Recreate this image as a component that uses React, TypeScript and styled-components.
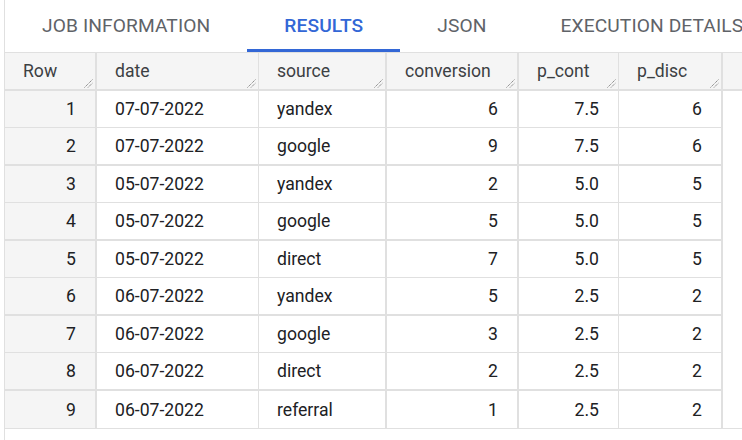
import styled, { createGlobalStyle } from "styled-components";

const GlobalStyle = createGlobalStyle`
  html, body {
    margin: 0;
    padding: 0;
    background: #ffffff;
  }
  body {
    font-family: Roboto, "Liberation Sans", Arial, sans-serif;
  }
`;

const Page = styled.div`
  margin-left: 4px;
  border-left: 1px solid #e0e0e0;
  height: 440px;
  overflow: hidden;
  background: #ffffff;
`;

const TabBar = styled.div`
  display: flex;
  height: 52px;
  white-space: nowrap;
`;

const Tab = styled.div<{ $active?: boolean }>`
  display: flex;
  align-items: center;
  justify-content: center;
  box-sizing: border-box;
  padding: 1px 37px 0;
  height: 52px;
  font-size: 19.2px;
  font-weight: ${(p) => (p.$active ? 500 : 400)};
  letter-spacing: 0.1px;
  color: ${(p) => (p.$active ? "#3367d6" : "#5f6368")};
  border-bottom: 3px solid ${(p) => (p.$active ? "#3367d6" : "transparent")};
  flex-shrink: 0;
`;

const Table = styled.div`
  border-top: 1px solid #e0e0e0;
  border-bottom: 1px solid #e0e0e0;
`;

const Row = styled.div<{ $head?: boolean; $thick?: boolean }>`
  display: flex;
  height: ${(p) => (p.$head || p.$thick ? 38 : 37)}px;
  box-sizing: border-box;
`;

const Cell = styled.div<{
  $w: number;
  $thickRight?: boolean;
  $thickBottom?: boolean;
  $num?: boolean;
  $head?: boolean;
  $gray?: boolean;
}>`
  position: relative;
  box-sizing: border-box;
  width: ${(p) => p.$w}px;
  flex-shrink: 0;
  display: flex;
  align-items: center;
  justify-content: ${(p) => (p.$num ? "flex-end" : "flex-start")};
  padding: 0 19px 0 18px;
  border-right: ${(p) => (p.$thickRight ? 2 : 1)}px solid #e0e0e0;
  border-bottom: ${(p) => (p.$thickBottom ? 2 : 1)}px solid #e0e0e0;
  background: ${(p) => (p.$gray ? "#f5f5f5" : "#ffffff")};
  font-size: 17.6px;
  color: ${(p) => (p.$head ? "#3c4043" : "#202124")};
  white-space: nowrap;
`;

const Filler = styled.div<{ $head?: boolean }>`
  flex: 1;
  background: ${(p) => (p.$head ? "#f5f5f5" : "#ffffff")};
  border-bottom: ${(p) => (p.$head ? "2px solid #e0e0e0" : "none")};
`;

const Handle = styled.svg`
  position: absolute;
  right: 2px;
  bottom: 1px;
  width: 9px;
  height: 9px;
`;

const ResizeHandle = () => (
  <Handle viewBox="0 0 9 9">
    <line x1="0.5" y1="8.5" x2="8.5" y2="0.5" stroke="#7a7a7a" strokeWidth="1" strokeDasharray="1.2 0.8" />
    <line x1="4" y1="8.5" x2="8.5" y2="4" stroke="#7a7a7a" strokeWidth="1" strokeDasharray="1.2 0.8" />
  </Handle>
);

const columns = [
  { key: "row", label: "Row", w: 92, thick: true, num: true },
  { key: "date", label: "date", w: 162, thick: false, num: false },
  { key: "source", label: "source", w: 128, thick: true, num: false },
  { key: "conversion", label: "conversion", w: 132, thick: true, num: true },
  { key: "p_cont", label: "p_cont", w: 100, thick: false, num: true },
  { key: "p_disc", label: "p_disc", w: 104, thick: true, num: true },
];

const data = [
  ["1", "07-07-2022", "yandex", "6", "7.5", "6"],
  ["2", "07-07-2022", "google", "9", "7.5", "6"],
  ["3", "05-07-2022", "yandex", "2", "5.0", "5"],
  ["4", "05-07-2022", "google", "5", "5.0", "5"],
  ["5", "05-07-2022", "direct", "7", "5.0", "5"],
  ["6", "06-07-2022", "yandex", "5", "2.5", "2"],
  ["7", "06-07-2022", "google", "3", "2.5", "2"],
  ["8", "06-07-2022", "direct", "2", "2.5", "2"],
  ["9", "06-07-2022", "referral", "1", "2.5", "2"],
];

const tabs = ["JOB INFORMATION", "RESULTS", "JSON", "EXECUTION DETAILS"];

export default function App() {
  return (
    <>
      <GlobalStyle />
      <Page>
        <TabBar>
          {tabs.map((t) => (
            <Tab key={t} $active={t === "RESULTS"}>
              {t}
            </Tab>
          ))}
        </TabBar>
        <Table>
          <Row $head>
            {columns.map((c) => (
              <Cell key={c.key} $w={c.w} $thickRight={c.thick} $thickBottom $head $gray>
                {c.label}
                <ResizeHandle />
              </Cell>
            ))}
            <Filler $head />
          </Row>
          {data.map((r, i) => {
            const thick = i % 2 === 1 && i < data.length - 1;
            const last = i === data.length - 1;
            return (
              <Row key={i} $thick={thick}>
                {columns.map((c, j) => (
                  <Cell
                    key={c.key}
                    $w={c.w}
                    $thickRight={c.thick}
                    $thickBottom={thick}
                    $num={c.num}
                    $gray={j === 0}
                    style={last ? { borderBottom: "none" } : undefined}
                  >
                    {r[j]}
                  </Cell>
                ))}
                <Filler />
              </Row>
            );
          })}
        </Table>
      </Page>
    </>
  );
}
